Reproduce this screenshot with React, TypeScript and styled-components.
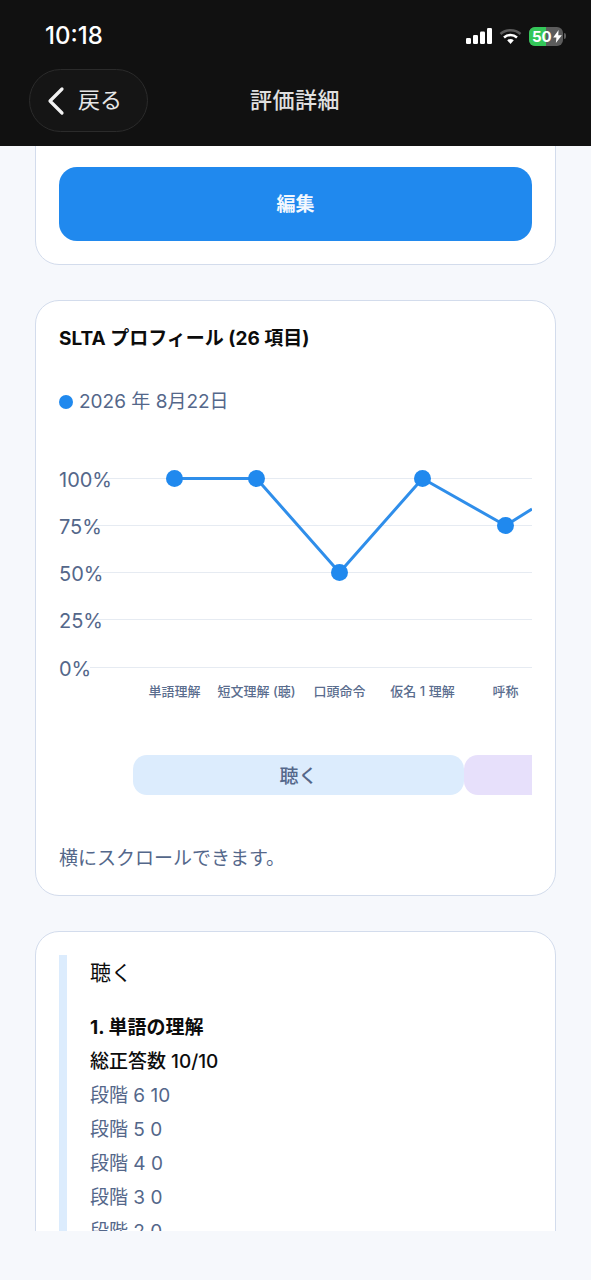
import styled, { createGlobalStyle } from "styled-components"

const points = [
    { x: 115.5, y: 37.5 },
    { x: 197.5, y: 37.5 },
    { x: 280.5, y: 131.5 },
    { x: 363.5, y: 37.5 },
    { x: 446.5, y: 84.5 },
]
const ticks = [
    { label: "100%", y: 37 },
    { label: "75%", y: 84 },
    { label: "50%", y: 131 },
    { label: "25%", y: 178 },
    { label: "0%", y: 226 },
]
const categories = [
    { label: "単語理解", x: 115.5 },
    { label: "短文理解 (聴)", x: 197.5 },
    { label: "口頭命令", x: 280.5 },
    { label: "仮名 1 理解", x: 363.5 },
    { label: "呼称", x: 446.5 },
]
const steps = [
    { label: "段階 6", value: "10" },
    { label: "段階 5", value: "0" },
    { label: "段階 4", value: "0" },
    { label: "段階 3", value: "0" },
    { label: "段階 2", value: "0" },
]

function App() {
    return (
        <Screen>
            <GlobalStyle />
            <Header>
                <StatusBar>
                    <Time>10:18</Time>
                    <StatusIcons>
                        <svg width="26" height="16" viewBox="0 0 26 16">
                            <rect x="0" y="10" width="5" height="6" rx="1.2" fill="#fff" />
                            <rect x="7" y="7" width="5" height="9" rx="1.2" fill="#fff" />
                            <rect x="14" y="3.5" width="5" height="12.5" rx="1.2" fill="#fff" />
                            <rect x="21" y="0" width="5" height="16" rx="1.2" fill="#fff" />
                        </svg>
                        <svg width="23" height="17" viewBox="0 0 23 17">
                            <path d="M1.500 6C7 1 16 1 21.500 6" fill="none" stroke="#5a5a5a" strokeWidth="2.600" />
                            <path d="M5 9.400C8.800 6.200 14.200 6.200 18 9.400" fill="none" stroke="#fff" strokeWidth="2.600" />
                            <path d="M8.200 12.200C10.200 10.700 12.800 10.700 14.800 12.200L11.500 16z" fill="#fff" />
                        </svg>
                        <BatteryWrap>
                            <Battery>
                                <BatteryLevel />
                                <BatteryText>50</BatteryText>
                                <svg width="9" height="13" viewBox="0 0 8 12">
                                    <path d="M5 0L0 7h3L2.500 12 8 4.800H4.700z" fill="#fff" />
                                </svg>
                            </Battery>
                            <BatteryNub />
                        </BatteryWrap>
                    </StatusIcons>
                </StatusBar>
                <NavBar>
                    <BackButton>
                        <svg width="20" height="30" viewBox="0 0 20 30">
                            <path d="M16 3L4 15l12 12" fill="none" stroke="#f2f2f2" strokeWidth="3.200" strokeLinecap="round" strokeLinejoin="round" />
                        </svg>
                        <BackLabel>戻る</BackLabel>
                    </BackButton>
                    <NavTitle>評価詳細</NavTitle>
                </NavBar>
            </Header>
            <Scroller>
                <TopCard>
                    <EditButton>編集</EditButton>
                </TopCard>
                <ChartCard>
                    <CardTitle>SLTA プロフィール (26 項目)</CardTitle>
                    <Legend>
                        <LegendDot />
                        2026 年 8月22日
                    </Legend>
                    <ChartSvg width="473" height="264" viewBox="0 0 473 264">
                        {ticks.map(tick => (
                            <g key={tick.label}>
                                <line x1="31" x2="473" y1={tick.y + 0.5} y2={tick.y + 0.5} stroke="#e6ebf2" />
                                <TickLabel x="0" y={tick.y + 9}>{tick.label}</TickLabel>
                            </g>
                        ))}
                        <polyline
                            points={[...points.map(p => `${p.x},${p.y}`), "473,68"].join(" ")}
                            fill="none"
                            stroke="#2f8eea"
                            strokeWidth="3"
                            strokeLinejoin="round"
                        />
                        {points.map(p => <circle key={p.x} cx={p.x} cy={p.y} r="8.500" fill="#2089ee" />)}
                        {categories.map(c => (
                            <CategoryLabel key={c.label} x={c.x} y="255" textAnchor="middle">{c.label}</CategoryLabel>
                        ))}
                    </ChartSvg>
                    <Bands>
                        <Band $color="#dcecfd" $width={331}>聴く</Band>
                        <Band $color="#e7e0fb" $width={120} />
                    </Bands>
                    <Hint>横にスクロールできます。</Hint>
                </ChartCard>
                <DetailCard>
                    <Section>
                        <SectionTitle>聴く</SectionTitle>
                        <ItemTitle>1. 単語の理解</ItemTitle>
                        <Total>総正答数 10/10</Total>
                        {steps.map(step => (
                            <Step key={step.label}>{step.label} {step.value}</Step>
                        ))}
                    </Section>
                </DetailCard>
            </Scroller>
        </Screen>
    )
}

export default App

//#region Styles
const GlobalStyle = createGlobalStyle`
    html, body {
        margin: 0;
        padding: 0;
        background: #f6f8fc;
    }
    * {
        box-sizing: border-box;
    }
`

const Screen = styled.div`
    width: 591px;
    height: 1280px;
    overflow: hidden;
    background: #f6f8fc;
    font-family: Inter, "Noto Sans CJK JP", sans-serif;
`

const Header = styled.header`
    height: 146px;
    background: #111111;
`

const StatusBar = styled.div`
    height: 69px;
    padding: 20px 25px 0 45px;
    display: flex;
    justify-content: space-between;
    align-items: flex-start;
`

const Time = styled.span`
    font-size: 24px;
    line-height: 32px;
    font-weight: 500;
    color: #fff;
`

const StatusIcons = styled.div`
    display: flex;
    align-items: center;
    gap: 7px;
    height: 32px;
`

const BatteryWrap = styled.div`
    display: flex;
    align-items: center;
    gap: 1px;
`

const Battery = styled.div`
    position: relative;
    width: 34px;
    height: 19px;
    border-radius: 6px;
    overflow: hidden;
    background: #5c5c5c;
    display: flex;
    align-items: center;
    padding-left: 3px;
    svg {
        position: relative;
        margin-left: 1px;
    }
`

const BatteryNub = styled.span`
    width: 2px;
    height: 6px;
    border-radius: 0 2px 2px 0;
    background: #5c5c5c;
`

const BatteryLevel = styled.div`
    position: absolute;
    left: 0;
    top: 0;
    bottom: 0;
    width: 17px;
    background: #34c759;
`

const BatteryText = styled.span`
    position: relative;
    font-size: 15px;
    line-height: 19px;
    font-weight: 700;
    color: #fff;
    letter-spacing: 0;
`

const NavBar = styled.div`
    height: 63px;
    padding-left: 29px;
    display: flex;
    align-items: center;
`

const BackButton = styled.div`
    width: 119px;
    height: 63px;
    border-radius: 32px;
    border: 1px solid #2b2b2b;
    background: #151515;
    padding-left: 16px;
    display: flex;
    align-items: center;
    gap: 12px;
    color: #e6e6e6;
    font-size: 22px;
`

const BackLabel = styled.span`
    padding-bottom: 5px;
`

const NavTitle = styled.div`
    margin-left: 102px;
    padding-bottom: 5px;
    font-size: 22px;
    letter-spacing: 0.5px;
    font-weight: 500;
    color: #e0e0e0;
`

const Scroller = styled.main`
    height: 1085px;
    overflow: hidden;
    padding: 0 35px;
    display: flex;
    flex-direction: column;
    gap: 35px;
`

const Card = styled.section`
    flex: none;
    background: #fff;
    border: 1px solid #d3dcec;
    border-radius: 24px;
`

const TopCard = styled(Card)`
    margin-top: -40px;
    padding: 60px 23px 23px;
`

const EditButton = styled.div`
    height: 74px;
    padding-bottom: 3px;
    border-radius: 18px;
    background: #2089ee;
    color: #f3f8fe;
    font-size: 19px;
    font-weight: 600;
    display: flex;
    align-items: center;
    justify-content: center;
`

const ChartCard = styled(Card)`
    height: 596px;
    padding: 23px 23px 0;
`

const CardTitle = styled.h2`
    margin: 0;
    font-size: 19px;
    line-height: 30px;
    font-weight: 700;
    color: #0c0c0c;
`

const Legend = styled.div`
    margin-top: 33px;
    display: flex;
    align-items: center;
    gap: 6px;
    font-size: 19px;
    line-height: 30px;
    color: #54678a;
`

const LegendDot = styled.span`
    width: 14px;
    height: 14px;
    border-radius: 50%;
    background: #2089ee;
`

const ChartSvg = styled.svg`
    display: block;
    margin-top: 24px;
`

const TickLabel = styled.text`
    font-size: 20px;
    fill: #54678a;
`

const CategoryLabel = styled.text`
    font-size: 13px;
    font-weight: 500;
    fill: #5a6d8e;
`

const Bands = styled.div`
    margin-top: 50px;
    padding-left: 74px;
    display: flex;
    overflow: hidden;
`

const Band = styled.div<{ $color: string; $width: number }>`
    flex: none;
    width: ${props => props.$width}px;
    height: 40px;
    padding-bottom: 2px;
    border-radius: 14px;
    background: ${props => props.$color};
    color: #54678a;
    font-size: 19px;
    font-weight: 500;
    display: flex;
    align-items: center;
    justify-content: center;
`

const Hint = styled.p`
    margin: 49px 0 0;
    font-size: 19px;
    line-height: 30px;
    color: #54678a;
`

const DetailCard = styled(Card)`
    padding: 23px 23px 0;
    height: 400px;
`

const Section = styled.div`
    border-left: 8px solid #dcecfd;
    padding-left: 23px;
`

const SectionTitle = styled.h3`
    margin: 0 0 20px;
    font-size: 21px;
    line-height: 36px;
    font-weight: 400;
    color: #0c0c0c;
`

const ItemTitle = styled.div`
    font-size: 19px;
    line-height: 34px;
    font-weight: 700;
    color: #0c0c0c;
`

const Total = styled.div`
    font-size: 19px;
    line-height: 34px;
    font-weight: 500;
    color: #0c0c0c;
`

const Step = styled.div`
    font-size: 19px;
    line-height: 34px;
    color: #54678a;
`
//#endregion
